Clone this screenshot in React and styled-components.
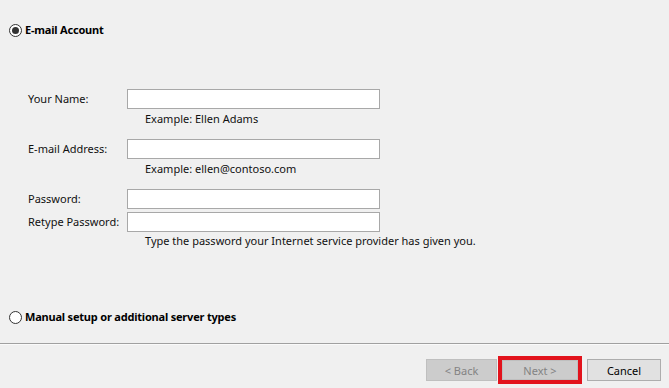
import React from "react"
import styled, { createGlobalStyle } from "styled-components"

const GlobalStyle = createGlobalStyle`
    html, body {
        margin: 0;
        padding: 0;
        background: #f0f0f0;
    }
    body {
        font-family: "Noto Sans", "Open Sans", sans-serif;
        font-size: 11px;
        color: #000;
    }
`

const Page = styled.div`
    width: 669px;
    height: 388px;
    display: flex;
    flex-direction: column;
    background: #f0f0f0;
    overflow: hidden;
`

const Content = styled.div`
    height: 343px;
    display: flex;
    flex-direction: column;
    padding-top: 22px;
    box-sizing: border-box;
`

const RadioRow = styled.label`
    display: flex;
    align-items: center;
    gap: 3px;
    height: 16px;
    padding-left: 9px;
    margin-top: ${p => p.$top || 0}px;
    font-weight: bold;
    font-size: 11px;
    letter-spacing: -0.2px;
    line-height: 16px;
    white-space: nowrap;
`

const RadioCircle = styled.span`
    width: 11px;
    height: 11px;
    border: 1px solid #333;
    border-radius: 50%;
    background: #fff;
    display: flex;
    align-items: center;
    justify-content: center;
    flex-shrink: 0;
    &::after {
        content: "";
        display: ${p => (p.$checked ? "block" : "none")};
        width: 7px;
        height: 7px;
        border-radius: 50%;
        background: #333;
    }
`

const Form = styled.div`
    display: flex;
    flex-direction: column;
    padding-left: 28px;
    margin-top: 51px;
`

const Field = styled.div`
    display: grid;
    grid-template-columns: 99px 253px;
    align-items: center;
    height: 20px;
    margin-top: ${p => p.$top || 0}px;
`

const Label = styled.span`
    line-height: 16px;
    color: #111;
    white-space: nowrap;
`

const Input = styled.input`
    box-sizing: border-box;
    width: 253px;
    height: 20px;
    border: 1px solid #a8a8a8;
    background: #fff;
    margin: 0;
    padding: 0 3px;
    font: inherit;
    outline: none;
`

const Hint = styled.div`
    margin-left: 117px;
    margin-top: ${p => p.$top || 0}px;
    line-height: 16px;
    color: #111;
    white-space: nowrap;
`

const Spacer = styled.div`
    flex: 1;
`

const Separator = styled.div`
    height: 1px;
    background: #a0a0a0;
    border-bottom: 1px solid #fafafa;
`

const ButtonBar = styled.div`
    display: flex;
    justify-content: flex-end;
    align-items: flex-start;
    padding: 14px 8px 0 0;
`

const Button = styled.button`
    box-sizing: border-box;
    width: ${p => p.$w}px;
    height: ${p => p.$h || 22}px;
    margin-left: ${p => p.$gap || 0}px;
    margin-top: ${p => p.$top || 0}px;
    font-family: "Noto Sans", "Open Sans", sans-serif;
    font-size: 11px;
    padding: 0;
    border: 1px solid ${p => (p.disabled ? "#bfbfbf" : "#adadad")};
    background: ${p => (p.disabled ? "#cccccc" : "#e1e1e1")};
    color: ${p => (p.disabled ? "#838383" : "#000")};
    outline: ${p => (p.$marked ? "4px solid #e2131c" : "none")};
    outline-offset: 0;
`

export default function App() {
    return (
        <Page>
            <GlobalStyle />
            <Content>
                <RadioRow>
                    <RadioCircle $checked />
                    E-mail Account
                </RadioRow>
                <Form>
                    <Field>
                        <Label>Your Name:</Label>
                        <Input />
                    </Field>
                    <Hint $top={2}>Example: Ellen Adams</Hint>
                    <Field $top={12}>
                        <Label>E-mail Address:</Label>
                        <Input />
                    </Field>
                    <Hint $top={2}>Example: ellen@contoso.com</Hint>
                    <Field $top={12}>
                        <Label>Password:</Label>
                        <Input type="password" />
                    </Field>
                    <Field $top={3}>
                        <Label>Retype Password:</Label>
                        <Input type="password" />
                    </Field>
                    <Hint $top={1}>Type the password your Internet service provider has given you.</Hint>
                </Form>
                <RadioRow $top={60}>
                    <RadioCircle />
                    Manual setup or additional server types
                </RadioRow>
                <Spacer />
            </Content>
            <Separator />
            <ButtonBar>
                <Button disabled $w={71}>&lt; Back</Button>
                <Button disabled $marked $w={76} $h={20} $top={1} $gap={5}>Next &gt;</Button>
                <Button $w={74} $gap={9}>Cancel</Button>
            </ButtonBar>
        </Page>
    )
}
